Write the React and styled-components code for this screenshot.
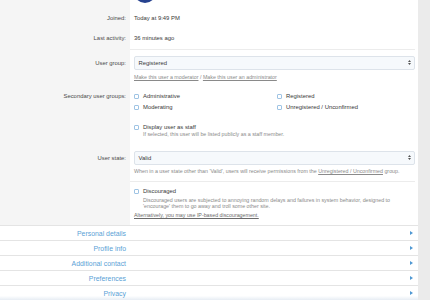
import React from 'react';
import styled, { createGlobalStyle } from 'styled-components';

const Global = createGlobalStyle`
  html, body { margin: 0; padding: 0; background: #ebebeb; }
  body { font-family: "Liberation Sans", Arial, sans-serif; color: #3c3c3c; }
  #root { width: 430px; height: 300px; overflow: hidden; }
`;

const Page = styled.div`
  width: 418px;
  height: 300px;
  background: #fff;
  overflow: hidden;
`;

const Row = styled.div`
  display: grid;
  grid-template-columns: 130px 1fr;
`;

const Label = styled.div`
  background: #f5f5f5;
  text-align: right;
  padding: ${p => p.$pt || 0}px 4px 0 0;
  font-size: 5.9px;
  line-height: ${p => p.$lh || 10}px;
  color: #4a4a4a;
  white-space: nowrap;
`;

const Controls = styled.div`
  padding: ${p => p.$pt || 0}px 3px ${p => p.$pb || 0}px 4px;
  font-size: 5.9px;
  line-height: ${p => p.$lh || 10}px;
  color: #383838;
  min-width: 0;
`;

const AvatarWrap = styled.div`
  height: 8px;
  overflow: hidden;
`;

const Avatar = styled.div`
  width: 22px;
  height: 22px;
  border-radius: 50%;
  background: #26428f;
  margin-top: -19px;
`;

const SepLine = styled.div`
  height: 1px;
  background: #ececec;
  margin-right: 3px;
`;

const Select = styled.div`
  height: 14px;
  box-sizing: border-box;
  border: 1px solid #dde3ea;
  border-radius: 2px;
  background: #f6f9fc;
  display: flex;
  align-items: center;
  justify-content: space-between;
  padding: 0 3px 0 3.5px;
  font-size: 5.9px;
  color: #383838;
`;

const Arrows = () => (
  <svg width="3" height="5" viewBox="0 0 3 5">
    <path d="M1.5 0 L3 2 L0 2 Z M1.5 5 L3 3 L0 3 Z" fill="#555" />
  </svg>
);

const Hint = styled.div`
  font-size: 5.3px;
  line-height: ${p => p.$lh || 7}px;
  color: #8a8a8a;
  margin-top: ${p => p.$mt || 0}px;
  margin-left: ${p => p.$ml || 0}px;
  max-width: ${p => (p.$mw ? `${p.$mw}px` : 'none')};
  white-space: ${p => (p.$mw ? 'normal' : 'nowrap')};
`;

const HintLink = styled.span`
  text-decoration: underline;
  color: ${p => (p.$dark ? '#6a6a6a' : '#8a8a8a')};
`;

const CheckGrid = styled.div`
  display: grid;
  grid-template-columns: 143px 1fr;
`;

const CheckItem = styled.div`
  display: flex;
  align-items: center;
  height: ${p => p.$h || 10.7}px;
  font-size: 5.9px;
  color: #383838;
  white-space: nowrap;
`;

const Box = styled.span`
  width: 5px;
  height: 5px;
  box-sizing: border-box;
  border: 1px solid #9fc4e4;
  border-radius: 1px;
  background: #fff;
  margin-right: 4px;
  flex: none;
`;

const Sections = styled.div`
  display: flex;
  flex-direction: column;
`;

const SectionRow = styled.div`
  display: grid;
  grid-template-columns: 130px 1fr;
  height: 15px;
  box-sizing: border-box;
  border-top: 1px solid #e4e4e4;
  align-items: center;
  background: ${p => (p.$last ? 'linear-gradient(to bottom, #fff 0%, #fff 70%, #e7edf4 100%)' : '#fff')};
`;

const SectionTitle = styled.div`
  text-align: right;
  padding-right: 4px;
  font-size: 6.9px;
  color: #5a9fd6;
  white-space: nowrap;
`;

const SectionArrow = styled.div`
  display: flex;
  justify-content: flex-end;
  padding-right: 5px;
`;

const Tri = () => (
  <svg width="3" height="4" viewBox="0 0 3 4">
    <path d="M0 0 L3 2 L0 4 Z" fill="#4f98d3" />
  </svg>
);

const sections = ['Personal details', 'Profile info', 'Additional contact', 'Preferences', 'Privacy'];

export default function App() {
  return (
    <>
      <Global />
      <Page>
        <Row>
          <Label />
          <Controls>
            <AvatarWrap>
              <Avatar />
            </AvatarWrap>
          </Controls>
        </Row>
        <Row>
          <Label $lh={21}>Joined:</Label>
          <Controls $lh={21}>Today at 9:49 PM</Controls>
        </Row>
        <Row>
          <Label $lh={19.5}>Last activity:</Label>
          <Controls $lh={19.5}>36 minutes ago</Controls>
        </Row>
        <Row>
          <Label />
          <SepLine />
        </Row>
        <Row>
          <Label $pt={6} $lh={14}>User group:</Label>
          <Controls $pt={6} $pb={5}>
            <Select>
              <span>Registered</span>
              <Arrows />
            </Select>
            <Hint $mt={3} $lh={8}>
              <HintLink>Make this user a moderator</HintLink> / <HintLink>Make this user an administrator</HintLink>
            </Hint>
          </Controls>
        </Row>
        <Row>
          <Label $pt={5.5} $lh={10.7}>Secondary user groups:</Label>
          <Controls $pt={5.5} $pb={5.1}>
            <CheckGrid>
              <CheckItem><Box />Administrative</CheckItem>
              <CheckItem><Box />Registered</CheckItem>
              <CheckItem><Box />Moderating</CheckItem>
              <CheckItem><Box />Unregistered / Unconfirmed</CheckItem>
            </CheckGrid>
          </Controls>
        </Row>
        <Row>
          <Label />
          <Controls $pt={5.7} $pb={5.7}>
            <CheckItem $h={8}><Box />Display user as staff</CheckItem>
            <Hint $ml={9} $lh={6.6}>If selected, this user will be listed publicly as a staff member.</Hint>
          </Controls>
        </Row>
        <Row>
          <Label $pt={7.5} $lh={14}>User state:</Label>
          <Controls $pt={7.5} $pb={6}>
            <Select>
              <span>Valid</span>
              <Arrows />
            </Select>
            <Hint $mt={3} $lh={7}>
              When in a user state other than 'Valid', users will receive permissions from the <HintLink>Unregistered / Unconfirmed</HintLink> group.
            </Hint>
          </Controls>
        </Row>
        <Row>
          <Label />
          <SepLine />
        </Row>
        <Row>
          <Label />
          <Controls $pt={5.2} $pb={6.5}>
            <CheckItem $h={8}><Box />Discouraged</CheckItem>
            <Hint $ml={9} $mt={1.4} $lh={6.4} $mw={262}>
              Discouraged users are subjected to annoying random delays and failures in system behavior, designed to 'encourage' them to go away and troll some other site.
            </Hint>
            <Hint $mt={2.6} $lh={7}>
              <HintLink $dark>Alternatively, you may use IP-based discouragement.</HintLink>
            </Hint>
          </Controls>
        </Row>
        <Sections>
          {sections.map((s, i) => (
            <SectionRow key={s} $last={i === sections.length - 1}>
              <SectionTitle>{s}</SectionTitle>
              <SectionArrow><Tri /></SectionArrow>
            </SectionRow>
          ))}
        </Sections>
      </Page>
    </>
  );
}
